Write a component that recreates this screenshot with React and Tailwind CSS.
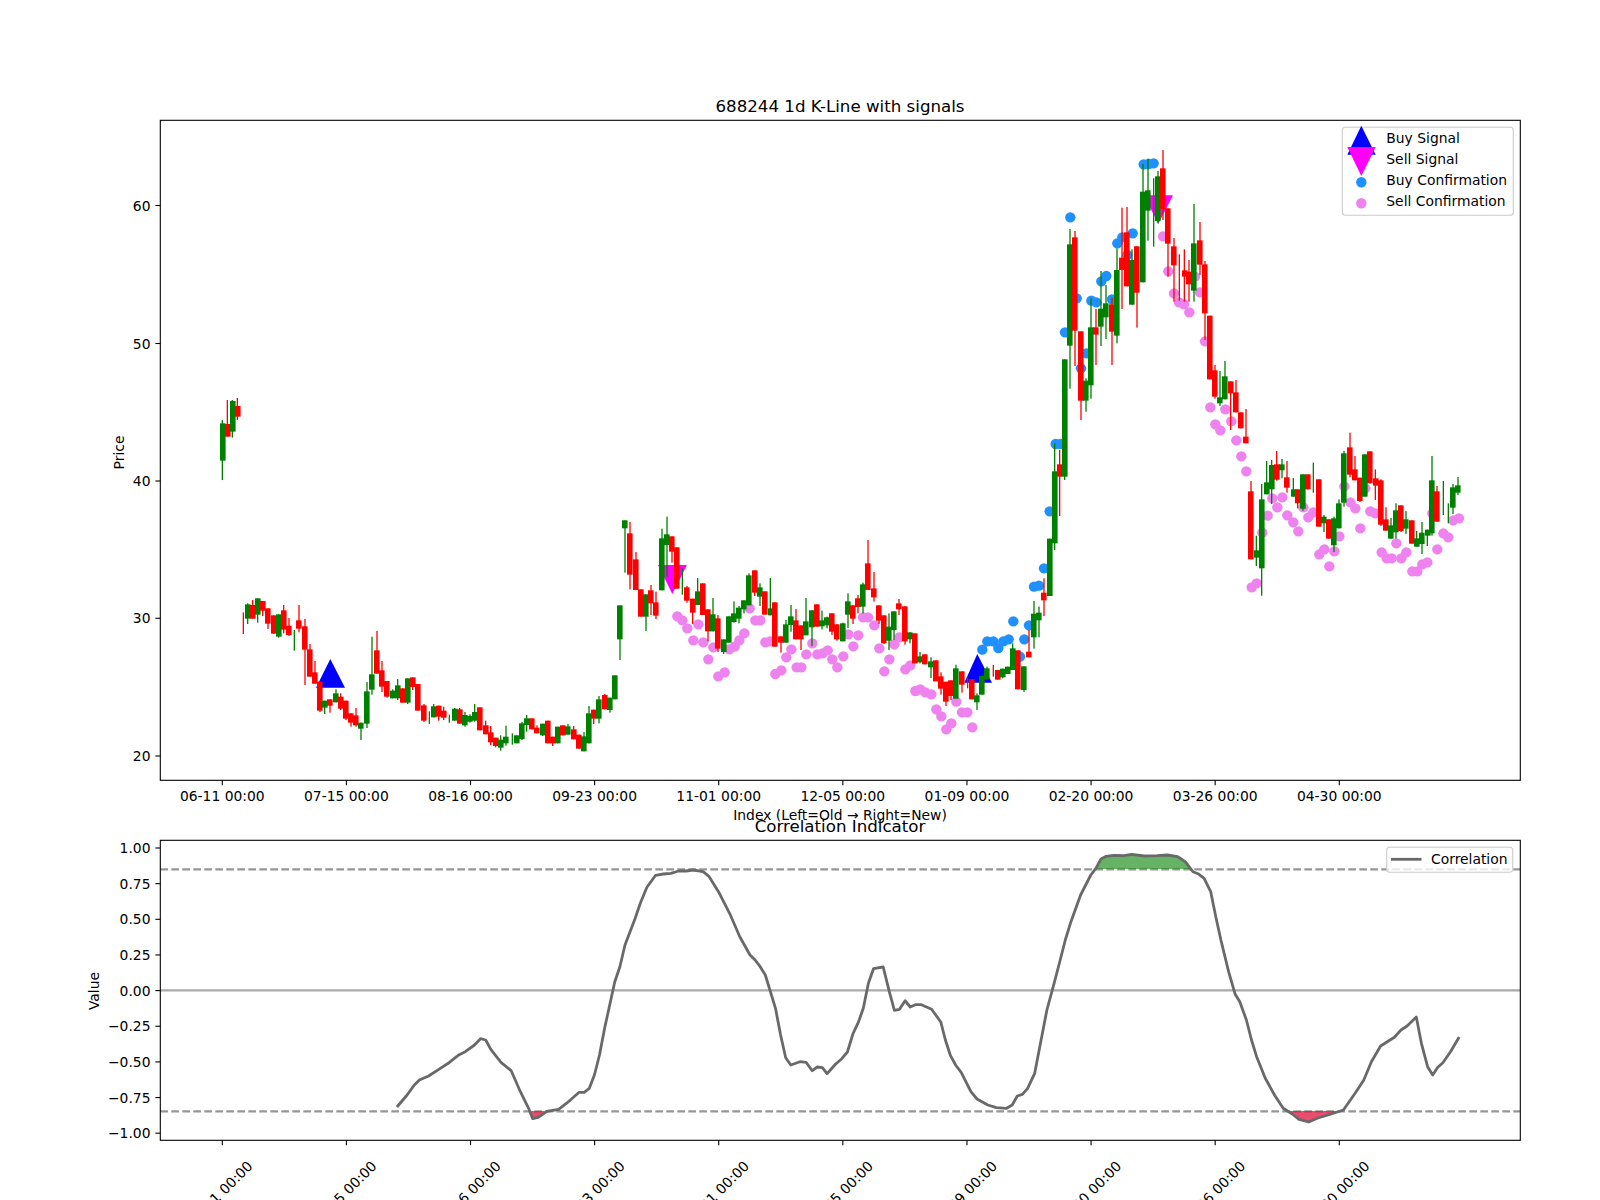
import React from 'react';

const GREEN = '#008000';
const RED = '#ff0000';
const g = 0;
const r = 1;

// candles as read off the chart: [x, colour, wickTop, wickBottom, bodyTop, bodyBottom]; bodyTop null = wick only
const block1 = [
  [217,g,120,300,130,242],[232,r,60,170,132,170],[247,g,60,173,63,155],[262,r,54,120,78,110],
  [280,r,697,762,null,null],[293,g,670,732,673,716],[308,r,660,716,675,716],[323,g,655,728,655,704],[338,r,663,708,663,692],
  [354,r,685,747,685,731],[371,r,706,761,706,761],[386,g,703,773,703,770],[401,r,675,760,691,749],[417,r,714,768,737,765],
  [433,g,750,812,null,null],[447,r,675,757,721,746],[465,r,717,915,739,809],[480,r,792,890,808,890],[495,r,843,911,877,911],
  [510,r,905,996,905,992],[524,g,962,1002,962,983],[540,r,958,998,958,977],[558,g,928,967,940,967],[572,r,940,990,950,986],
  [588,r,962,1020,962,1016],[603,r,1000,1040,1000,1028],[618,r,984,1040,1006,1036],[633,g,1028,1080,1028,1046],[651,g,906,1044,934,1031],
  [666,g,770,944,883,929],[681,r,753,881,811,881],[696,r,843,936,871,920],[711,r,903,953,903,950],[728,g,928,955,932,955],
  [743,g,897,960,916,955],[758,r,925,968,925,968],[773,g,895,972,895,968],[788,r,892,930,892,921],[803,r,912,992,912,992],
  [822,r,972,1026,976,1022],[838,g,994,1032,null,null],[851,g,972,1012,979,1012],[866,r,977,1022,977,1010],[881,r,980,1020,992,1013],
  [898,g,1004,1028,null,null],[914,g,984,1022,986,1022],[929,r,984,1031,988,1031],[945,g,996,1040,1005,1036],[960,g,1003,1028,1008,1025],
  [974,g,972,1025,996,1022],[990,r,982,1051,982,1051],[1007,r,1022,1063,1036,1063],[1022,r,1038,1095,1057,1087],[1037,r,1073,1102,1073,1098],
  [1052,g,1066,1112,1079,1103],[1068,g,1037,1097,1070,1090],[1087,g,1060,1094,null,null],[1100,g,1066,1090,1066,1090],[1116,g,1026,1080,1030,1077],
  [1130,g,1005,1055,1015,1035],[1146,r,1015,1048,1015,1048],[1161,r,1036,1060,1043,1060],[1178,g,1031,1068,1031,1066],[1194,r,1022,1090,1022,1090],
  [1208,r,1070,1098,1070,1090],[1223,g,1040,1090,1040,1090],[1238,r,1036,1066,1036,1066],[1254,g,1032,1064,1039,1064],[1271,r,1038,1078,1048,1078],
  [1287,r,1064,1106,1064,1106],[1302,g,1056,1114,1069,1114],[1317,g,978,1090,1000,1090],[1331,r,989,1032,989,1016],[1347,g,948,1030,958,1016],
  [1364,r,942,988,945,988],[1380,g,953,998,953,990],[1395,g,886,958,886,958],[1410,g,676,840,676,778],[1425,g,421,578,421,445],
  [1440,r,426,628,460,584],[1458,r,516,630,538,630],[1473,r,628,710,628,710],[1488,g,643,753,643,710],[1503,r,615,705,631,670],[1518,r,635,717,667,707],
];
const block2 = [
  [66,g,86,271,115,271],[81,g,50,230,103,135],[96,r,109,188,109,155],[111,r,142,266,142,266],[127,g,205,284,null,null],
  [141,r,258,308,262,302],[158,r,296,372,296,338],[173,g,234,315,274,315],[188,r,250,345,250,345],[204,r,328,424,328,394],
  [219,g,294,394,343,394],[234,r,345,456,355,446],[251,g,418,462,418,456],[267,g,349,428,349,428],[282,g,304,368,340,366],
  [297,g,318,370,323,356],[312,g,301,340,301,328],[327,g,220,316,226,316],[344,r,211,288,211,278],[360,g,250,318,262,290],
  [375,r,274,344,274,344],[391,g,234,346,325,346],[405,r,307,440,307,440],[423,r,409,458,409,428],[438,g,360,428,373,428],
  [453,g,315,395,349,375],[468,r,327,418,361,418],[483,r,376,450,376,418],[498,g,294,406,364,406],[516,g,330,438,331,382],
  [531,r,313,380,313,380],[546,g,332,388,361,379],[561,g,350,385,352,376],[576,r,340,405,340,395],[591,r,373,422,373,418],
  [609,g,368,424,370,424],[624,g,280,384,304,344],[639,r,316,372,316,356],[654,r,285,340,295,321],[669,g,248,340,253,320],
  [684,r,120,270,190,270],[702,r,216,305,265,292],[717,r,316,372,316,362],[732,r,346,432,346,430],[747,g,340,450,380,422],
  [762,g,334,420,334,390],[777,r,297,345,310,328],[795,r,319,434,319,424],[810,g,397,430,397,418],[825,r,400,490,400,490],
  [840,g,456,490,469,487],[855,r,463,493,463,493],[873,g,472,534,484,502],[888,r,481,544,481,544],[903,r,517,584,529,566],
  [918,r,545,618,545,605],[933,r,541,600,541,588],[948,g,494,596,505,596],[966,r,514,578,514,554],[983,r,533,565,null,null],
  [996,r,538,598,538,598],[1011,g,580,630,586,607],[1026,g,528,584,528,584],[1041,g,500,538,505,538],[1060,r,495,530,null,null],
  [1073,r,510,539,510,539],[1088,g,506,535,506,532],[1103,g,500,522,500,522],[1118,g,430,510,445,510],[1134,r,451,568,451,568],
  [1152,g,499,576,499,570],[1167,r,390,472,455,472],[1182,g,303,446,341,412],[1197,g,320,412,338,361],[1212,r,235,348,278,301],
  [1229,g,116,288,116,288],
];
const block3 = [
  [104,g,1000,1320,1084,1300],[119,r,1020,1218,1063,1100],[134,g,748,1110,748,1100],[150,g,357,836,403,707],[165,r,363,768,382,662],
  [183,r,664,930,664,872],[198,g,805,905,812,872],[213,g,565,866,652,826],[228,r,597,765,652,674],[243,g,483,708,596,650],
  [258,g,525,687,580,622],[276,r,563,765,583,665],[291,g,415,700,480,677],[306,r,293,597,443,480],[321,r,291,529,367,529],
  [336,g,418,584,450,584],[351,r,409,653,409,548],[369,g,162,517,245,517],[384,g,146,392,241,302],[401,g,205,410,null,null],
  [414,g,183,340,199,333],[429,r,120,330,175,297],[444,r,295,500,295,401],[462,r,384,575,409,466],[478,r,433,572,null,null],
  [493,r,418,575,481,500],[507,r,450,575,485,523],[522,g,282,575,400,542],[540,r,336,495,391,464],[555,r,453,690,463,610],
  [570,r,617,808,617,808],[585,r,765,866,781,860],[600,g,783,888,862,880],[615,g,753,868,799,868],[632,r,814,960,814,850],
  [648,r,810,907,847,907],[663,r,907,955,907,955],[678,r,897,1000,980,1000],
];
const block4 = [
  [693,r,183,418,214,418],[709,g,347,438,391,413],[725,g,192,527,238,445],[740,g,123,223,187,223],[755,g,120,252,135,208],
  [770,r,93,182,133,179],[786,g,117,175,133,151],[801,r,123,218,172,203],[820,g,174,230,208,230],[833,r,208,265,208,250],
  [849,g,163,272,163,266],[864,r,163,208,163,208],[880,g,128,218,null,null],[897,r,178,320,178,320],[912,g,285,336,290,310],
  [926,r,298,356,298,356],[942,g,290,396,295,376],[957,g,238,325,250,325],[972,g,93,260,100,248],[990,r,38,172,82,164],
  [1005,r,108,181,148,181],[1020,r,173,246,173,243],[1035,g,103,230,103,230],[1050,r,94,190,94,190],[1066,r,148,240,175,197],
  [1083,r,178,318,181,314],[1098,r,262,332,298,332],[1113,g,294,356,316,356],[1128,g,250,356,271,337],[1143,r,256,336,256,333],
  [1158,g,273,342,298,326],[1176,r,301,371,301,371],[1190,g,333,380,355,380],[1206,g,306,402,338,372],[1222,g,329,378,329,347],
  [1236,g,108,347,181,340],[1251,r,198,305,214,305],[1270,g,183,285,null,null],[1285,g,250,310,null,null],[1299,g,192,282,202,263],
  [1314,g,171,225,196,218],
];

const scaled = (ox, oy, list) =>
  list.map(([x, c, wt, wb, bt, bb]) => ({
    x: ox + x / 3,
    color: c === g ? GREEN : RED,
    wt: oy + wt / 3,
    wb: oy + wb / 3,
    bt: bt === null ? null : oy + bt / 3,
    bb: bb === null ? null : oy + bb / 3,
  }));

const candles = [
  ...scaled(150, 380, block1),
  ...scaled(640, 500, block2),
  ...scaled(1020, 110, block3),
  ...scaled(1020, 420, block4),
];

const pts = (ox, oy, list) => list.map(([x, y]) => [ox + x / 3, oy + y / 3]);

const buyDots = [
  ...pts(640, 500, [[1027,449],[1042,424],[1060,424],[1075,444],[1090,424],[1106,418],[1120,364],[1140,470],[1153,418],[1167,376],[1182,260],[1197,257],[1212,205],[1229,34]]),
  ...pts(1020, 110, [[107,1002],[122,1002],[135,667],[151,322],[170,565],[183,775],[199,730],[214,572],[229,577],[244,514],[259,498],[276,568],[292,400],[307,382],[322,435],[338,370],[371,163],[386,162],[401,160]]),
];

const sellDots = [
  ...pts(640, 500, [[112,349],[127,361],[142,385],[160,421],[175,373],[190,427],[205,478],[220,442],[235,529],[254,517],[268,448],[284,440],[298,421],[313,400],[329,325],[346,361],[361,361],[376,427],[391,424],[406,522],[424,511],[439,472],[454,448],[470,502],[484,502],[499,463],[517,430],[532,463],[548,460],[563,451],[577,478],[592,502],[610,469],[625,403],[640,439],[655,406],[669,352],[684,352],[703,376],[718,445],[733,514],[748,478],[763,433],[778,412],[796,508],[811,496],[826,573],[841,568],[856,577],[874,583],[889,628],[904,649],[919,688],[934,670],[949,605],[966,637],[982,637],[997,682]]),
  ...pts(1020, 110, [[429,379],[445,484],[462,550],[477,577],[492,583],[508,607],[525,500],[540,547],[555,694],[571,892],[586,943],[601,961],[616,898],[634,934],[649,991],[664,1039],[679,1084]]),
  ...pts(1020, 420, [[695,502],[710,490],[727,338],[743,287],[757,235],[772,262],[787,232],[802,286],[820,307],[835,334],[850,262],[865,292],[880,277],[898,403],[913,388],[928,439],[943,394],[958,349],[973,199],[991,247],[1006,265],[1021,325],[1036,205],[1051,274],[1066,280],[1085,397],[1100,415],[1115,415],[1129,370],[1144,415],[1159,397],[1177,454],[1192,454],[1207,433],[1222,427],[1237,280],[1252,388],[1270,340],[1285,352],[1300,301],[1317,295]]),
];

// correlation curve, x and y have different read scales
const corrA = [[778,981],[798,945],[812,915],[822,900],[840,888],[860,868],[880,848],[900,824],[912,815],[930,795],[942,776],[952,780],[962,808],[982,847],[1002,872],[1020,935],[1036,985],[1044,1016],[1055,1012],[1072,994],[1095,988],[1112,968],[1135,937],[1145,937],[1155,925],[1165,885],[1175,825],[1185,745],[1195,675],[1205,605],[1215,560],[1225,495],[1245,415],[1255,370],[1268,322],[1285,286],[1300,282],[1315,280],[1330,273],[1345,273],[1358,270],[1378,275],[1390,290],[1410,340],[1430,400],[1450,470],[1470,525],[1480,540],[1490,560],[1500,585],[1510,635],[1520,685],[1530,765],[1540,833],[1550,855],[1565,847]];
const corrB = [[0,845],[12,847],[24,872],[34,861],[44,863],[53,881],[70,852],[82,836],[93,816],[104,760],[114,728],[124,685],[134,610],[144,566],[163,561],[175,635],[185,691],[195,688],[206,662],[216,681],[226,674],[238,674],[258,688],[276,726],[285,780],[295,827],[305,855],[316,877],[335,935],[347,957],[368,975],[385,983],[405,985],[416,975],[426,948],[436,943],[446,925],[460,880],[470,800],[484,690],[498,610],[510,540],[520,480],[530,430],[550,345],[570,285],[580,265],[590,237],[600,229],[615,226],[635,227],[650,223],[675,228],[700,227],[720,225],[740,230],[755,245],[770,275],[780,281],[792,295],[805,335],[815,410],[825,480],[840,575],[853,643],[862,665],[875,720],[885,780],[895,830],[912,895],[930,945],[947,985],[965,1002],[978,1018],[997,1026],[1015,1014],[1035,1005],[1065,990],[1088,940],[1105,900],[1120,845],[1138,798],[1165,772],[1178,750],[1190,738],[1208,711],[1218,790],[1230,860],[1240,885],[1250,862],[1260,848],[1275,815],[1292,771]];

const cx = (x, ox) => ox + x / 1.96;
const cy = (y) => 780 + y / 3;
const toPoints = (list, ox) => list.map(([x, y]) => `${cx(x, ox).toFixed(1)},${cy(y).toFixed(1)}`).join(' ');
const corrLine = `${toPoints(corrA, 0)} ${toPoints(corrB, 800)}`;

const greenFill = toPoints([[578,267],[590,237],[600,229],[615,226],[635,227],[650,223],[675,228],[700,227],[720,225],[740,230],[755,245],[768,267]], 800);
const redFillB = toPoints([[958,993],[965,1002],[978,1018],[997,1026],[1015,1014],[1035,1005],[1065,993]], 800);
const redFillA = toPoints([[1038,993],[1044,1016],[1055,1012],[1072,993]], 0);

const xTicks = ['06-11', '07-15', '08-16', '09-23', '11-01', '12-05', '01-09', '02-20', '03-26', '04-30'];
const tickX = (i) => 222.3 + 124.11 * i;
const priceTicks = [[20, 756], [30, 618.3], [40, 481], [50, 343.5], [60, 205.5]];
const corrTicks = ['1.00', '0.75', '0.50', '0.25', '0.00', '−0.25', '−0.50', '−0.75', '−1.00'];

export default function App() {
  return (
    <div className="w-[1600px] h-[1200px] bg-white overflow-hidden">
      <svg width="1600" height="1200" viewBox="0 0 1600 1200" className="block font-['DejaVu_Sans',sans-serif] text-[13.89px] fill-black">
        {/* price panel */}
        <text x="840" y="112" textAnchor="middle" className="text-[16.67px]">688244 1d K-Line with signals</text>
        {sellDots.map(([x, y], i) => <circle key={i} cx={x} cy={y} r="5.2" fill="#ee82ee" />)}
        {buyDots.map(([x, y], i) => <circle key={i} cx={x} cy={y} r="5.2" fill="#1e90ff" />)}
        <polygon points="330.3,659 316,687.7 345,687.7" fill="#0000ff" />
        <polygon points="977.3,654 964.3,682.7 992,682.7" fill="#0000ff" />
        <polygon points="658,565 687,565 672.3,594" fill="#ff00ff" />
        <polygon points="1144,195.3 1173,195.3 1158.3,224" fill="#ff00ff" />
        {candles.map((c, i) => (
          <g key={i} fill={c.color}>
            <rect x={c.x - 0.65} y={c.wt} width="1.3" height={c.wb - c.wt} />
            {c.bt !== null && <rect x={Math.round(c.x - 2.8)} y={c.bt} width="5.6" height={c.bb - c.bt} />}
          </g>
        ))}
        <rect x="160.3" y="120.3" width="1360" height="660" fill="none" stroke="#000" strokeWidth="1.1" />
        {xTicks.map((t, i) => (
          <g key={t}>
            <line x1={tickX(i)} x2={tickX(i)} y1="780.3" y2="785.2" stroke="#000" strokeWidth="1.1" />
            <text x={tickX(i)} y="801" textAnchor="middle">{t} 00:00</text>
          </g>
        ))}
        {priceTicks.map(([v, y]) => (
          <g key={v}>
            <line x1="155.4" x2="160.3" y1={y} y2={y} stroke="#000" strokeWidth="1.1" />
            <text x="150.5" y={y + 5} textAnchor="end">{v}</text>
          </g>
        ))}
        <text transform="translate(124 452.5) rotate(-90)" textAnchor="middle">Price</text>
        <text x="840" y="820" textAnchor="middle">Index (Left=Old → Right=New)</text>

        {/* legend */}
        <rect x="1342.3" y="127.3" width="171" height="88" rx="3" fill="#ffffff" fillOpacity="0.8" stroke="#cccccc" strokeWidth="1.1" />
        <polygon points="1361.3,125.7 1347.3,154.7 1375.7,154.7" fill="#0000ff" />
        <polygon points="1347.3,147 1375.7,147 1361.3,176" fill="#ff00ff" />
        <circle cx="1361.3" cy="182.3" r="5.2" fill="#1e90ff" />
        <circle cx="1361.3" cy="203.3" r="5.2" fill="#ee82ee" />
        <text x="1386.3" y="143.3">Buy Signal</text>
        <text x="1386.3" y="164.3">Sell Signal</text>
        <text x="1386.3" y="185.3">Buy Confirmation</text>
        <text x="1386.3" y="206.3">Sell Confirmation</text>

        {/* correlation panel */}
        <text x="840" y="832" textAnchor="middle" className="text-[16.67px]">Correlation Indicator</text>
        <line x1="160.3" x2="1520.3" y1="990.4" y2="990.4" stroke="#aaaaaa" strokeWidth="2.1" />
        <line x1="160.3" x2="1520.3" y1="869.4" y2="869.4" stroke="#969696" strokeWidth="2.1" strokeDasharray="7.7 3.3" />
        <line x1="160.3" x2="1520.3" y1="1111.4" y2="1111.4" stroke="#969696" strokeWidth="2.1" strokeDasharray="7.7 3.3" />
        <polygon points={greenFill} fill="#008000" fillOpacity="0.6" />
        <polygon points={redFillA} fill="#dc143c" fillOpacity="0.75" />
        <polygon points={redFillB} fill="#dc143c" fillOpacity="0.75" />
        <polyline points={corrLine} fill="none" stroke="#696969" strokeWidth="2.8" strokeLinejoin="round" />
        <rect x="160.3" y="840.3" width="1360" height="300" fill="none" stroke="#000" strokeWidth="1.1" />
        {xTicks.map((t, i) => (
          <g key={t}>
            <line x1={tickX(i)} x2={tickX(i)} y1="1140.3" y2="1145.2" stroke="#000" strokeWidth="1.1" />
            <text transform={`translate(${tickX(i) + 1.2} 1197) rotate(-45)`} textAnchor="middle">{t} 00:00</text>
          </g>
        ))}
        {corrTicks.map((t, i) => {
          const y = 848 + 35.65 * i;
          return (
            <g key={t}>
              <line x1="155.4" x2="160.3" y1={y} y2={y} stroke="#000" strokeWidth="1.1" />
              <text x="150.5" y={y + 5} textAnchor="end">{t}</text>
            </g>
          );
        })}
        <text transform="translate(99 991) rotate(-90)" textAnchor="middle">Value</text>
        <rect x="1386.7" y="847.3" width="126" height="25" rx="3" fill="#ffffff" fillOpacity="0.8" stroke="#cccccc" strokeWidth="1.1" />
        <line x1="1391" x2="1421.5" y1="859.3" y2="859.3" stroke="#696969" strokeWidth="2.8" />
        <text x="1431" y="864">Correlation</text>
      </svg>
    </div>
  );
}
